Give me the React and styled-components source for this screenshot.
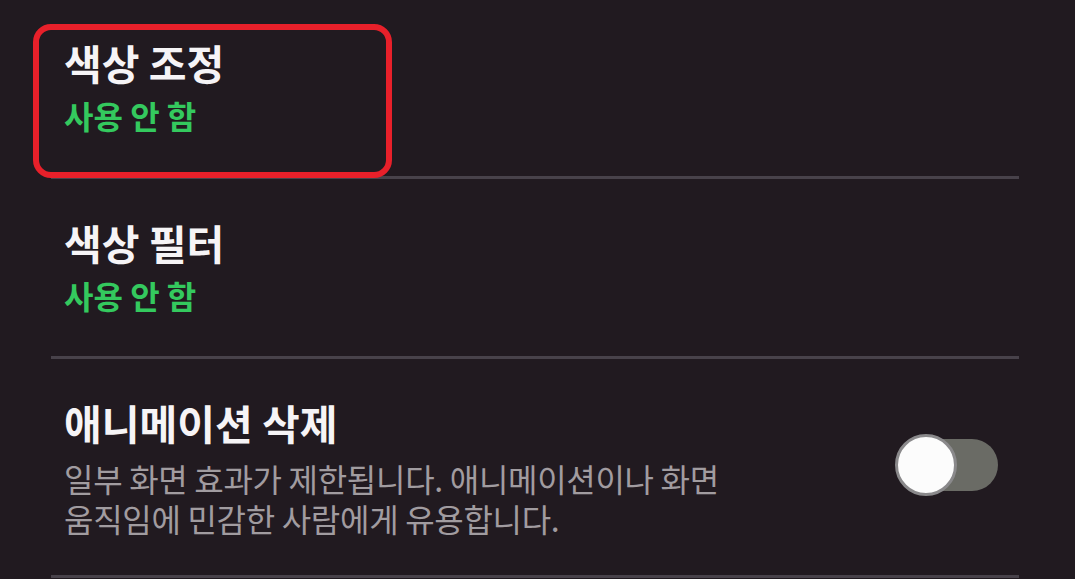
import React from "react";
import styled, { createGlobalStyle } from "styled-components";

const Global = createGlobalStyle`
  html, body { margin: 0; padding: 0; background: #211a20; }
  body { font-family: "Noto Sans CJK KR", "Noto Sans", sans-serif; }
  * { box-sizing: border-box; }
`;

const Page = styled.div`
  width: 1075px;
  height: 579px;
  overflow: hidden;
  background: #211a20;
  padding: 0 56px 0 51px;
`;

const List = styled.div`
  display: flex;
  flex-direction: column;
`;

const Item = styled.div`
  position: relative;
  display: flex;
  align-items: center;
  justify-content: space-between;
  padding: ${(p) => p.$pad};
  border-bottom: 3px solid #48424a;
`;

const Texts = styled.div`
  display: flex;
  flex-direction: column;
  padding-left: 13px;
`;

const Title = styled.div`
  color: #f6f4f6;
  font-size: 41px;
  line-height: 48px;
  font-weight: 700;
`;

const Status = styled.div`
  color: #34c95e;
  font-size: 32px;
  line-height: 40px;
  font-weight: 700;
  margin-top: 9px;
`;

const Desc = styled.div`
  color: #a19ca0;
  font-size: 32px;
  line-height: 40px;
  font-weight: 400;
  letter-spacing: -0.3px;
  margin-top: 12px;
`;

const Highlight = styled.div`
  position: absolute;
  left: -18px;
  top: 24px;
  width: 359px;
  height: 154px;
  border: 6px solid #e8202a;
  border-radius: 18px;
  pointer-events: none;
`;

const Switch = styled.div`
  position: relative;
  width: 103px;
  height: 62px;
  margin-right: 21px;
  margin-top: -6px;
  flex-shrink: 0;
`;

const Track = styled.div`
  position: absolute;
  left: 6px;
  right: 0;
  top: 5px;
  height: 52px;
  border-radius: 26px;
  background: #6a6b65;
`;

const Thumb = styled.div`
  position: absolute;
  left: 0;
  top: 0;
  width: 62px;
  height: 62px;
  border-radius: 50%;
  background: #fcfcfc;
  border: 3px solid #8a898b;
`;

export default function App() {
  return (
    <>
      <Global />
      <Page>
        <List>
          <Item $pad="38px 0 41px 0">
            <Texts>
              <Title>색상 조정</Title>
              <Status>사용 안 함</Status>
            </Texts>
            <Highlight />
          </Item>
          <Item $pad="39px 0 41px 0">
            <Texts>
              <Title>색상 필터</Title>
              <Status>사용 안 함</Status>
            </Texts>
          </Item>
          <Item $pad="39px 0 37px 0">
            <Texts>
              <Title>애니메이션 삭제</Title>
              <Desc>
                일부 화면 효과가 제한됩니다. 애니메이션이나 화면
                <br />
                움직임에 민감한 사람에게 유용합니다.
              </Desc>
            </Texts>
            <Switch>
              <Track />
              <Thumb />
            </Switch>
          </Item>
        </List>
      </Page>
    </>
  );
}
